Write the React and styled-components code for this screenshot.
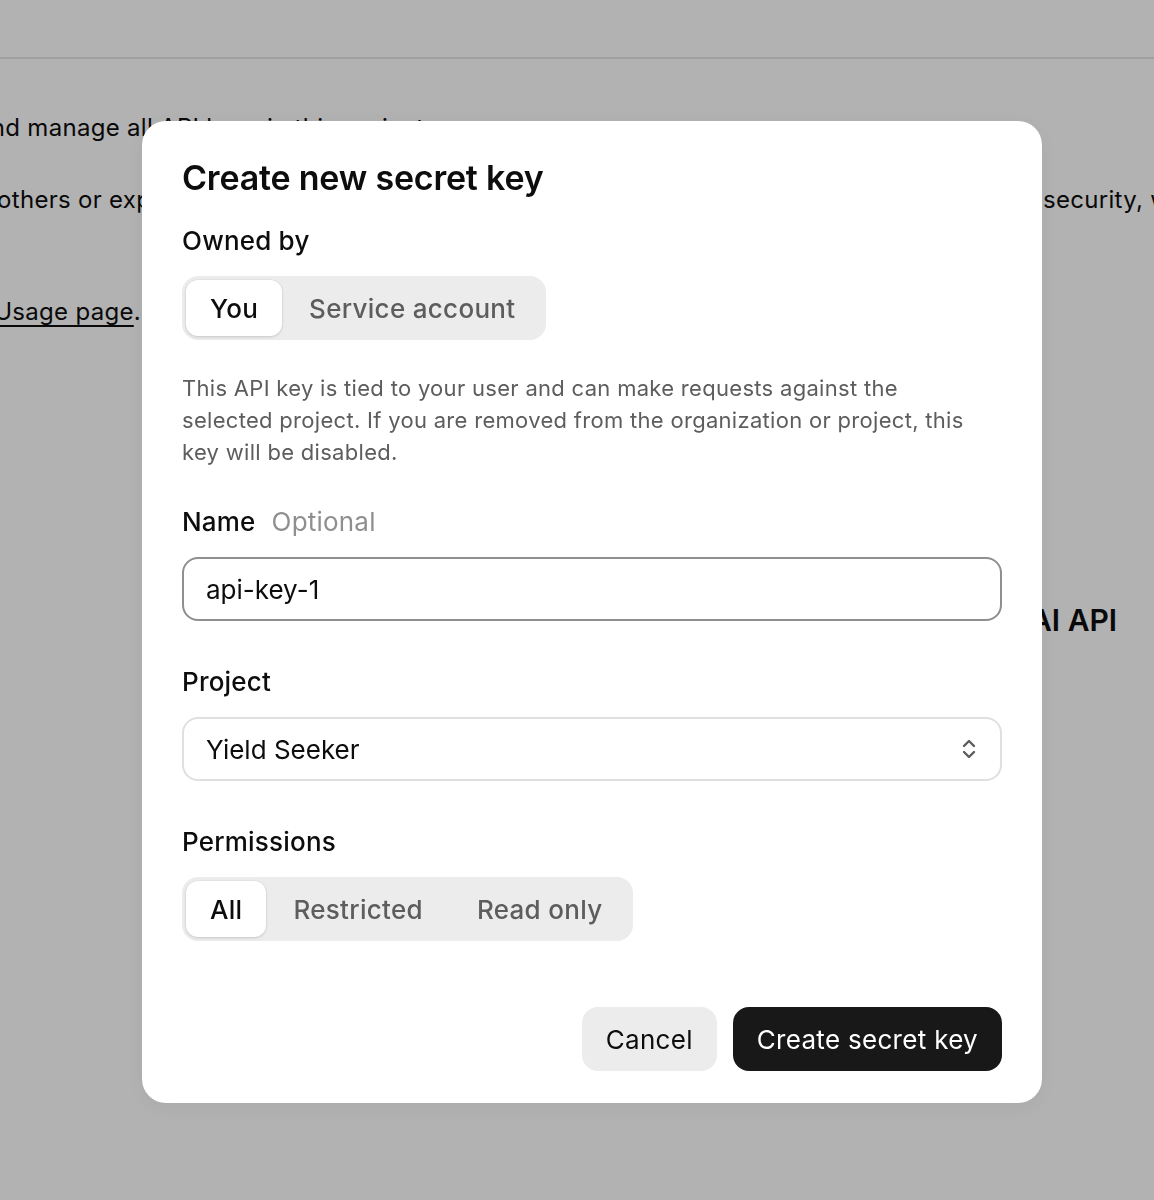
import React, { useState } from "react";
import styled, { createGlobalStyle } from "styled-components";

const GlobalStyle = createGlobalStyle`
  html, body {
    margin: 0;
    padding: 0;
    background: #ffffff;
    overflow: hidden;
  }
  body {
    font-family: Inter, "Noto Sans", "Liberation Sans", sans-serif;
    color: #0d0d0d;
    -webkit-font-smoothing: antialiased;
  }
  * {
    box-sizing: border-box;
  }
`;

const Page = styled.div`
  width: 1154px;
  height: 1200px;
  overflow: hidden;
  display: flex;
  flex-direction: column;
`;

const TopBar = styled.div`
  height: 59px;
  border-bottom: 2px solid #e6e6e6;
  flex-shrink: 0;
`;

const PageBody = styled.div`
  display: flex;
  flex-direction: column;
  padding-top: 51px;
`;

const PageRow = styled.div`
  display: grid;
  grid-template-columns: ${(p) => p.cols};
  margin-top: ${(p) => p.gap || 0}px;
  font-size: ${(p) => (p.heading ? 30 : 24)}px;
  font-weight: ${(p) => (p.heading ? 600 : 400)};
  line-height: ${(p) => (p.heading ? 40 : 36)}px;
  letter-spacing: ${(p) => (p.heading ? 0 : 0.3)}px;
  color: #0d0d0d;
  white-space: nowrap;
`;

/* text that ends at the column edge and runs off to the left */
const LeadCell = styled.div`
  display: flex;
  justify-content: flex-end;
  min-width: 0;
`;

const RestCell = styled.div`
  padding-left: ${(p) => (p.tight ? 0 : 7)}px;
  overflow: hidden;
`;

const Underlined = styled.span`
  text-decoration: underline;
  text-underline-offset: 5px;
  text-decoration-thickness: 2px;
`;

const Backdrop = styled.div`
  position: fixed;
  inset: 0;
  background: rgba(0, 0, 0, 0.3);
  display: flex;
  align-items: flex-start;
  justify-content: flex-start;
  padding: 121px 0 0 142px;
`;

const Modal = styled.div`
  width: 900px;
  background: #ffffff;
  border-radius: 24px;
  padding: 35px 40px 32px;
  display: flex;
  flex-direction: column;
  box-shadow: 0 4px 24px rgba(0, 0, 0, 0.06);
`;

const Title = styled.h1`
  margin: 0;
  font-size: 34px;
  line-height: 44px;
  font-weight: 600;
  letter-spacing: -0.2px;
  color: #0d0d0d;
`;

const Label = styled.div`
  margin-top: ${(p) => p.top}px;
  font-size: 26px;
  line-height: 32px;
  font-weight: 500;
  letter-spacing: 0.2px;
  color: #0d0d0d;
  display: flex;
  gap: 16px;
`;

const Hint = styled.span`
  font-weight: 400;
  color: #8f8f8f;
`;

const Segmented = styled.div`
  margin-top: 19px;
  align-self: flex-start;
  display: flex;
  background: #ececec;
  border-radius: 16px;
  padding: 4px;
`;

const Segment = styled.button`
  border: none;
  height: 56px;
  padding: 0 ${(p) => (p.active ? 24 : 27)}px;
  border-radius: 12px;
  font-family: inherit;
  font-size: 26px;
  font-weight: 500;
  letter-spacing: 0.3px;
  cursor: pointer;
  background: ${(p) => (p.active ? "#ffffff" : "transparent")};
  color: ${(p) => (p.active ? "#0d0d0d" : "#5d5d5d")};
  box-shadow: ${(p) =>
    p.active ? "0 1px 3px rgba(0,0,0,0.14), 0 0 0 1px rgba(0,0,0,0.02)" : "none"};
`;

const Description = styled.p`
  margin: 32px 0 0;
  font-size: 22px;
  line-height: 32px;
  letter-spacing: 0.3px;
  color: #5d5d5d;
  max-width: 800px;
`;

const Field = styled.div`
  margin-top: 19px;
  height: 64px;
  border: 2px solid ${(p) => (p.focused ? "#8f8f8f" : "#e0e0e0")};
  border-radius: 16px;
  display: flex;
  align-items: center;
  justify-content: space-between;
  padding: 0 24px 0 22px;
`;

const FieldInput = styled.input`
  border: none;
  outline: none;
  flex: 1;
  font-family: inherit;
  font-size: 26px;
  color: #0d0d0d;
  background: transparent;
  padding: 0;
`;

const FieldValue = styled.span`
  font-size: 26px;
  color: #0d0d0d;
`;

const Footer = styled.div`
  margin-top: 66px;
  display: flex;
  justify-content: flex-end;
  gap: 16px;
`;

const Button = styled.button`
  height: 64px;
  border: none;
  border-radius: 16px;
  padding: 0 24px;
  font-family: inherit;
  font-size: 26px;
  font-weight: 400;
  letter-spacing: 0.3px;
  cursor: pointer;
  background: ${(p) => (p.primary ? "#181818" : "#ececec")};
  color: ${(p) => (p.primary ? "#ffffff" : "#0d0d0d")};
`;

const Chevrons = () => (
  <svg width="14" height="24" viewBox="0 0 14 24" fill="none">
    <path
      d="M2 9L7 4L12 9"
      stroke="#5d5d5d"
      strokeWidth="2.4"
      strokeLinecap="round"
      strokeLinejoin="round"
    />
    <path
      d="M2 15L7 20L12 15"
      stroke="#5d5d5d"
      strokeWidth="2.4"
      strokeLinecap="round"
      strokeLinejoin="round"
    />
  </svg>
);

export default function App() {
  const [owner, setOwner] = useState("you");
  const [perm, setPerm] = useState("all");
  const [name, setName] = useState("api-key-1");

  return (
    <>
      <GlobalStyle />
      <Page>
        <TopBar />
        <PageBody>
          <PageRow cols="120px 1fr">
            <LeadCell>View and manage</LeadCell>
            <RestCell>all API keys in this project.</RestCell>
          </PageRow>
          <PageRow cols="71px 972px 1fr" gap={36}>
            <LeadCell>Do not share your API key with others</LeadCell>
            <RestCell>or expose it in the browser or other client-side code. In order to protect the</RestCell>
            <RestCell tight>security, we recommend</RestCell>
          </PageRow>
          <PageRow cols="141px 1fr" gap={76}>
            <LeadCell>
              <span>
                You can view usage per API key on the <Underlined>Usage page</Underlined>.
              </span>
            </LeadCell>
            <RestCell />
          </PageRow>
          <PageRow cols="1030px 1fr" gap={270} heading>
            <LeadCell>Welcome to the Open</LeadCell>
            <RestCell tight>AI API</RestCell>
          </PageRow>
        </PageBody>
      </Page>
      <Backdrop>
        <Modal>
          <Title>Create new secret key</Title>
          <Label top={25}>Owned by</Label>
          <Segmented>
            <Segment active={owner === "you"} onClick={() => setOwner("you")}>
              You
            </Segment>
            <Segment active={owner === "service"} onClick={() => setOwner("service")}>
              Service account
            </Segment>
          </Segmented>
          <Description>
            This API key is tied to your user and can make requests against the selected project. If
            you are removed from the organization or project, this key will be disabled.
          </Description>
          <Label top={38}>
            Name <Hint>Optional</Hint>
          </Label>
          <Field focused>
            <FieldInput value={name} onChange={(e) => setName(e.target.value)} />
          </Field>
          <Label top={45}>Project</Label>
          <Field>
            <FieldValue>Yield Seeker</FieldValue>
            <Chevrons />
          </Field>
          <Label top={45}>Permissions</Label>
          <Segmented>
            <Segment active={perm === "all"} onClick={() => setPerm("all")}>
              All
            </Segment>
            <Segment active={perm === "restricted"} onClick={() => setPerm("restricted")}>
              Restricted
            </Segment>
            <Segment active={perm === "read"} onClick={() => setPerm("read")}>
              Read only
            </Segment>
          </Segmented>
          <Footer>
            <Button>Cancel</Button>
            <Button primary>Create secret key</Button>
          </Footer>
        </Modal>
      </Backdrop>
    </>
  );
}
